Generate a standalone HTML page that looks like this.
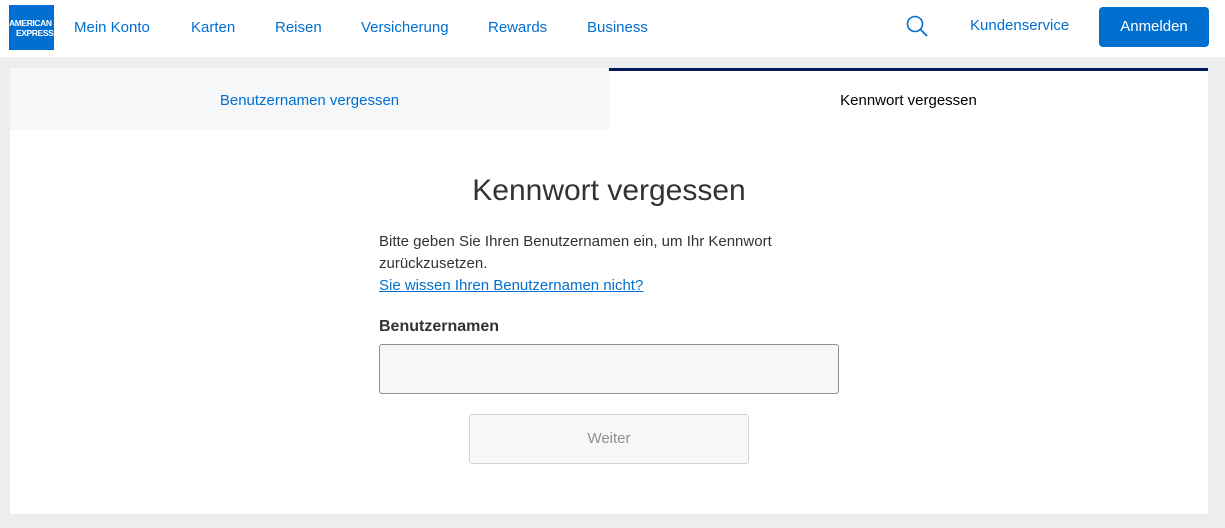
<!DOCTYPE html>
<html><head><meta charset="utf-8"><style>
*{box-sizing:border-box;margin:0;padding:0}
body{width:1225px;height:528px;background:#ecedee;font-family:"Liberation Sans",Arial,sans-serif;overflow:hidden;position:relative}
.hdr{position:absolute;left:0;top:0;width:1225px;height:57px;background:#fff}
.logo{position:absolute;left:9px;top:5px;width:45px;height:45px;background:#016fd0;color:#fff;font-size:8.5px;font-weight:bold;letter-spacing:-0.4px;line-height:9px}
.logo span{position:absolute;white-space:nowrap}
.nav{position:absolute;top:19px;font-size:15px;color:#006fcf}
.btn{position:absolute;left:1099px;top:7px;width:110px;height:40px;background:#006fcf;border-radius:4px;color:#fff;font-size:15px;text-align:center;line-height:40px}
.card{position:absolute;left:10px;top:68px;width:1198px;height:446px;background:#fff}
.tab1{position:absolute;left:0;top:0;width:599px;height:62px;background:#f6f7f8;color:#006fcf;font-size:15px;text-align:center;line-height:66px}
.tab2{position:absolute;left:599px;top:0;width:599px;height:62px;border-top:3px solid #00175a;color:#000;font-size:15px;text-align:center;line-height:60px}
h1{position:absolute;left:0;width:1198px;top:106px;text-align:center;font-weight:normal;font-size:30px;color:#333}
.txt{position:absolute;left:369px;top:163px;width:440px;font-size:15px;line-height:22px;color:#333}
.txt a{color:#006fcf;text-decoration:underline}
.lbl{position:absolute;left:369px;top:250px;font-size:16px;font-weight:bold;color:#333}
.inp{position:absolute;left:369px;top:276px;width:460px;height:50px;background:#f6f7f8;border:1px solid #8e9093;border-radius:3px}
.wb{position:absolute;left:459px;top:346px;width:280px;height:50px;background:#f6f7f8;border:1px solid #d3d4d6;border-radius:3px;text-align:center;line-height:48px;font-size:15px;color:#8e9093}
</style></head><body>
<div class="hdr">
<div class="logo"><span style="left:0;top:14px">AMERICAN</span><span style="left:7px;top:24px">EXPRESS</span></div>
<div class="nav" style="left:74px">Mein Konto</div>
<div class="nav" style="left:191px">Karten</div>
<div class="nav" style="left:275px">Reisen</div>
<div class="nav" style="left:361px">Versicherung</div>
<div class="nav" style="left:488px">Rewards</div>
<div class="nav" style="left:587px">Business</div>
<svg style="position:absolute;left:906px;top:15px" width="23" height="23" viewBox="0 0 23 23"><circle cx="9" cy="9" r="7.5" fill="none" stroke="#006fcf" stroke-width="1.6"/><line x1="14.5" y1="14.5" x2="21" y2="21" stroke="#006fcf" stroke-width="1.8"/></svg>
<div class="nav" style="left:970px;top:17px">Kundenservice</div>
<div class="btn">Anmelden</div>
</div>
<div class="card">
<div class="tab1">Benutzernamen vergessen</div>
<div class="tab2">Kennwort vergessen</div>
<h1>Kennwort vergessen</h1>
<div class="txt">Bitte geben Sie Ihren Benutzernamen ein, um Ihr Kennwort zurückzusetzen.<br><a>Sie wissen Ihren Benutzernamen nicht?</a></div>
<div class="lbl">Benutzernamen</div>
<div class="inp"></div>
<div class="wb">Weiter</div>
</div>
</body></html>
